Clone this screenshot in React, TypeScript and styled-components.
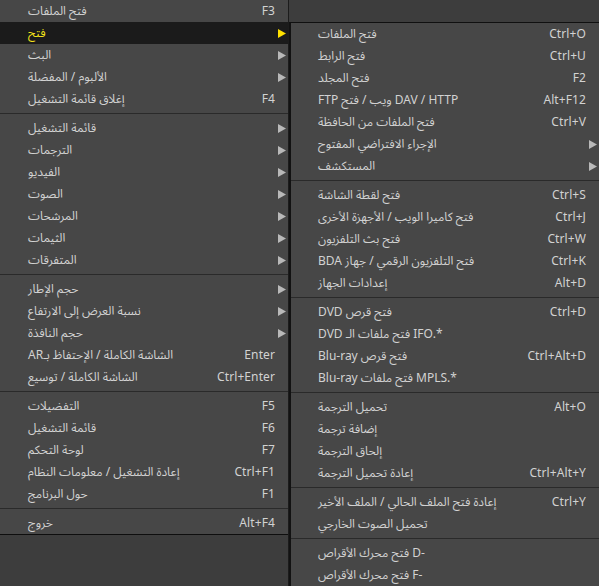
import React from "react";
import styled, { createGlobalStyle } from "styled-components";

type Item =
  | { sep: true }
  | { label: string; keys?: string; sub?: boolean; active?: boolean };

const mainMenu: Item[] = [
  { label: "فتح الملفات", keys: "F3" },
  { label: "فتح", sub: true, active: true },
  { label: "البث", sub: true },
  { label: "الألبوم / المفضلة", sub: true },
  { label: "إغلاق قائمة التشغيل", keys: "F4" },
  { sep: true },
  { label: "قائمة التشغيل", sub: true },
  { label: "الترجمات", sub: true },
  { label: "الفيديو", sub: true },
  { label: "الصوت", sub: true },
  { label: "المرشحات", sub: true },
  { label: "الثيمات", sub: true },
  { label: "المتفرقات", sub: true },
  { sep: true },
  { label: "حجم الإطار", sub: true },
  { label: "نسبة العرض إلى الارتفاع", sub: true },
  { label: "حجم النافذة", sub: true },
  { label: "الشاشة الكاملة / الإحتفاظ بـAR", keys: "Enter" },
  { label: "الشاشة الكاملة / توسيع", keys: "Ctrl+Enter" },
  { sep: true },
  { label: "التفضيلات", keys: "F5" },
  { label: "قائمة التشغيل", keys: "F6" },
  { label: "لوحة التحكم", keys: "F7" },
  { label: "إعادة التشغيل / معلومات النظام", keys: "Ctrl+F1" },
  { label: "حول البرنامج", keys: "F1" },
  { sep: true },
  { label: "خروج", keys: "Alt+F4" },
];

const openMenu: Item[] = [
  { label: "فتح الملفات", keys: "Ctrl+O" },
  { label: "فتح الرابط", keys: "Ctrl+U" },
  { label: "فتح المجلد", keys: "F2" },
  { label: "HTTP\u200F / DAV ويب / فتح FTP", keys: "Alt+F12" },
  { label: "فتح الملفات من الحافظة", keys: "Ctrl+V" },
  { label: "الإجراء الافتراضي المفتوح", sub: true },
  { label: "المستكشف", sub: true },
  { sep: true },
  { label: "فتح لقطة الشاشة", keys: "Ctrl+S" },
  { label: "فتح كاميرا الويب / الأجهزة الأخرى", keys: "Ctrl+J" },
  { label: "فتح بث التلفزيون", keys: "Ctrl+W" },
  { label: "فتح التلفزيون الرقمي / جهاز BDA", keys: "Ctrl+K" },
  { label: "إعدادات الجهاز", keys: "Alt+D" },
  { sep: true },
  { label: "فتح قرص DVD", keys: "Ctrl+D" },
  { label: "*.IFO فتح ملفات الـ DVD" },
  { label: "فتح قرص Blu-ray", keys: "Ctrl+Alt+D" },
  { label: "*.MPLS فتح ملفات Blu-ray" },
  { sep: true },
  { label: "تحميل الترجمة", keys: "Alt+O" },
  { label: "إضافة ترجمة" },
  { label: "إلحاق الترجمة" },
  { label: "إعادة تحميل الترجمة", keys: "Ctrl+Alt+Y" },
  { sep: true },
  { label: "إعادة فتح الملف الحالي / الملف الأخير", keys: "Ctrl+Y" },
  { label: "تحميل الصوت الخارجي" },
  { sep: true },
  { label: "-D فتح محرك الأقراص" },
  { label: "-F فتح محرك الأقراص" },
];

const GlobalStyle = createGlobalStyle`
  html, body {
    margin: 0;
    padding: 0;
    background: #3d3d3d;
  }
  body {
    font-family: "Noto Sans", "Noto Sans Arabic", "DejaVu Sans", sans-serif;
    font-size: 12px;
  }
`;

const Screen = styled.div`
  display: flex;
  width: 599px;
  height: 586px;
  overflow: hidden;
  background: #3d3d3d;
`;

const MainColumn = styled.div`
  width: 288px;
  flex: none;
  border-right: 1px solid #1c1c1c;
`;

const MenuBox = styled.div<{ $pad: number }>`
  background: #474747;
  padding-left: 0;
  --pad: ${({ $pad }) => $pad}px;
`;

const MainBox = styled(MenuBox)`
  border-bottom: 1px solid #0e0e0e;
`;

const SubColumn = styled.div`
  flex: 1;
  padding-top: 22px;
  min-width: 0;
`;

const SubBox = styled(MenuBox)`
  border-top: 1px solid #101010;
  border-left: 2px solid #121212;
  height: 100%;
`;

const Row = styled.div<{ $active?: boolean }>`
  display: grid;
  grid-template-columns: 1fr auto 13px;
  align-items: center;
  height: 22px;
  padding-left: var(--pad);
  background: ${({ $active }) => ($active ? "#1b1b1b" : "transparent")};
  color: ${({ $active }) => ($active ? "#f2e21a" : "#d2d2d2")};
`;

const Label = styled.span`
  justify-self: start;
  direction: rtl;
  unicode-bidi: isolate;
  white-space: nowrap;
  line-height: 22px;
`;

const Keys = styled.span`
  white-space: nowrap;
  line-height: 22px;
  letter-spacing: 0.1px;
`;

const ArrowCell = styled.span`
  display: flex;
  align-items: center;
  padding-left: 3px;
`;

const Separator = styled.div`
  height: 1px;
  margin: 3px 0;
  background: #2a2a2a;
`;

const Arrow = ({ color }: { color: string }) => (
  <svg width="8" height="9" viewBox="0 0 8 9">
    <polygon points="0,0 8,4.5 0,9" fill={color} />
  </svg>
);

const MenuItems = ({ items }: { items: Item[] }) => (
  <>
    {items.map((item, i) =>
      "sep" in item ? (
        <Separator key={i} />
      ) : (
        <Row key={i} $active={item.active}>
          <Label>{item.label}</Label>
          <Keys>{item.keys}</Keys>
          <ArrowCell>
            {item.sub && <Arrow color={item.active ? "#ffe100" : "#b9b9b9"} />}
          </ArrowCell>
        </Row>
      )
    )}
  </>
);

export default function App() {
  return (
    <>
      <GlobalStyle />
      <Screen>
        <MainColumn>
          <MainBox $pad={28}>
            <MenuItems items={mainMenu} />
          </MainBox>
        </MainColumn>
        <SubColumn>
          <SubBox $pad={27}>
            <MenuItems items={openMenu} />
          </SubBox>
        </SubColumn>
      </Screen>
    </>
  );
}
